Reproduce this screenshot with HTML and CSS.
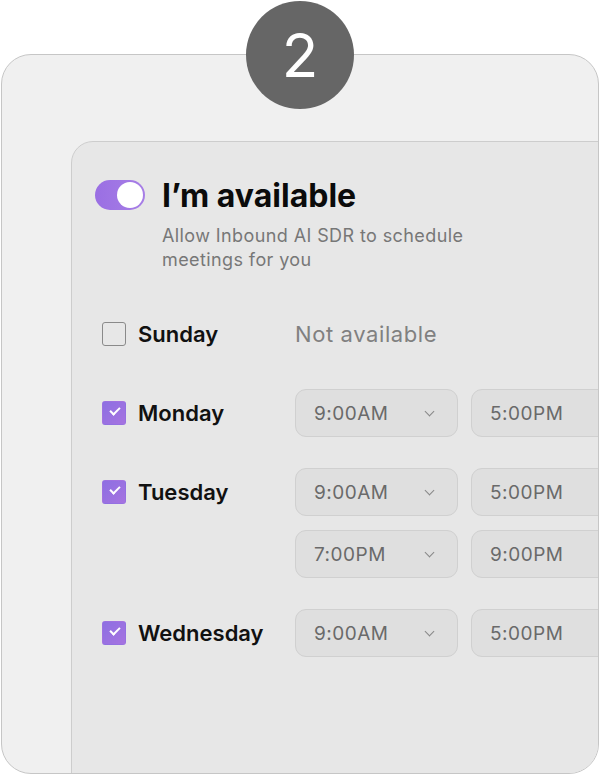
FILE: index.html
```html
<!DOCTYPE html>
<html lang="en">
<head>
    <meta charset="UTF-8">
    <meta name="viewport" content="width=device-width, initial-scale=1.0">
    <title>Availability</title>
    <link rel="stylesheet" href="styles.css">
</head>
<body>
    <div class="card-wrap">
        <div class="step">2</div>
        <div class="frame">
            <div class="panel">
                <div class="head">
                    <span class="toggle"><span class="knob"></span></span>
                    <h1>I’m available</h1>
                    <p>Allow Inbound AI SDR to schedule<br>meetings for you</p>
                </div>

                <div class="days">
                    <div class="day">
                        <label class="day-name"><span class="check"></span>Sunday</label>
                        <div class="off">Not available</div>
                    </div>
                    <div class="day">
                        <label class="day-name"><span class="check on"></span>Monday</label>
                        <div class="slots">
                            <div class="slot">
                                <div class="select">9:00AM<span class="chev"></span></div>
                                <div class="select">5:00PM<span class="chev"></span></div>
                            </div>
                        </div>
                    </div>
                    <div class="day">
                        <label class="day-name"><span class="check on"></span>Tuesday</label>
                        <div class="slots">
                            <div class="slot">
                                <div class="select">9:00AM<span class="chev"></span></div>
                                <div class="select">5:00PM<span class="chev"></span></div>
                            </div>
                            <div class="slot">
                                <div class="select">7:00PM<span class="chev"></span></div>
                                <div class="select">9:00PM<span class="chev"></span></div>
                            </div>
                        </div>
                    </div>
                    <div class="day">
                        <label class="day-name"><span class="check on"></span>Wednesday</label>
                        <div class="slots">
                            <div class="slot">
                                <div class="select">9:00AM<span class="chev"></span></div>
                                <div class="select">5:00PM<span class="chev"></span></div>
                            </div>
                        </div>
                    </div>
                </div>
            </div>
        </div>
    </div>
</body>
</html>
```

FILE: styles.css
```css
body {
    margin: 0;
    background: #ffffff;
    font-family: Inter, "Noto Sans", sans-serif;
    color: #111;
}
.card-wrap {
    position: relative;
    padding: 54px 1px 0 1px;
}
.step {
    position: absolute;
    top: 1px;
    left: 246px;
    width: 108px;
    height: 108px;
    border-radius: 50%;
    background: #666666;
    color: #ffffff;
    font-size: 60px;
    line-height: 108px;
    text-align: center;
    z-index: 2;
}
.frame {
    height: 718px;
    border: 1px solid #c6c6c6;
    border-radius: 30px;
    background: #f0f0f0;
    overflow: hidden;
}
.panel {
    margin: 86px 0 0 69px;
    width: 620px;
    height: 700px;
    border: 1px solid #cdcdcd;
    border-radius: 22px;
    background: #e7e7e7;
    padding: 34px 0 0 0;
    box-sizing: border-box;
}
.head {
    display: grid;
    grid-template-columns: 50px auto;
    column-gap: 17px;
    padding-left: 23px;
}
.toggle {
    grid-row: 1;
    align-self: center;
    position: relative;
    width: 50px;
    height: 30px;
    border-radius: 15px;
    background: linear-gradient(90deg, #9a6fe3, #a77ee6);
    margin-top: -3px;
}
.knob {
    position: absolute;
    top: 2px;
    right: 2px;
    width: 26px;
    height: 26px;
    border-radius: 50%;
    background: #ffffff;
}
.head h1 {
    grid-row: 1;
    grid-column: 2;
    margin: 0;
    font-size: 32px;
    line-height: 40px;
    font-weight: 700;
    color: #0b0b0b;
}
.head p {
    grid-column: 2;
    margin: 8px 0 0 0;
    font-size: 18px;
    line-height: 24px;
    letter-spacing: 0.4px;
    color: #777777;
}
.days {
    margin-top: 38px;
    padding-left: 30px;
    display: flex;
    flex-direction: column;
    gap: 31px;
}
.day {
    display: grid;
    grid-template-columns: 193px auto;
}
.day-name {
    display: flex;
    align-items: center;
    gap: 12px;
    height: 48px;
    font-size: 22px;
    font-weight: 600;
    color: #111;
}
.check {
    width: 22px;
    height: 22px;
    border: 1.5px solid #8a8a8a;
    border-radius: 3px;
    position: relative;
}
.check.on {
    border-color: transparent;
    background: linear-gradient(135deg, #8d6fe2, #a673e0);
}
.check.on::after {
    content: "";
    position: absolute;
    left: 7px;
    top: 5px;
    width: 8px;
    height: 4px;
    border-left: 2px solid #fff;
    border-bottom: 2px solid #fff;
    transform: rotate(-45deg);
}
.off {
    height: 48px;
    line-height: 48px;
    font-size: 22px;
    letter-spacing: 0.6px;
    color: #808080;
}
.slots {
    display: flex;
    flex-direction: column;
    gap: 14px;
}
.slot {
    display: flex;
    gap: 13px;
}
.select {
    width: 163px;
    height: 48px;
    box-sizing: border-box;
    border: 1.5px solid #d0d0d0;
    border-radius: 11px;
    background: #dfdfdf;
    padding: 0 24px 0 18px;
    display: flex;
    align-items: center;
    justify-content: space-between;
    font-size: 19px;
    letter-spacing: 0.5px;
    color: #6a6a6a;
}
.chev {
    width: 6px;
    height: 6px;
    border-right: 1.5px solid #888;
    border-bottom: 1.5px solid #888;
    transform: rotate(45deg);
    margin-top: -4px;
}
```
